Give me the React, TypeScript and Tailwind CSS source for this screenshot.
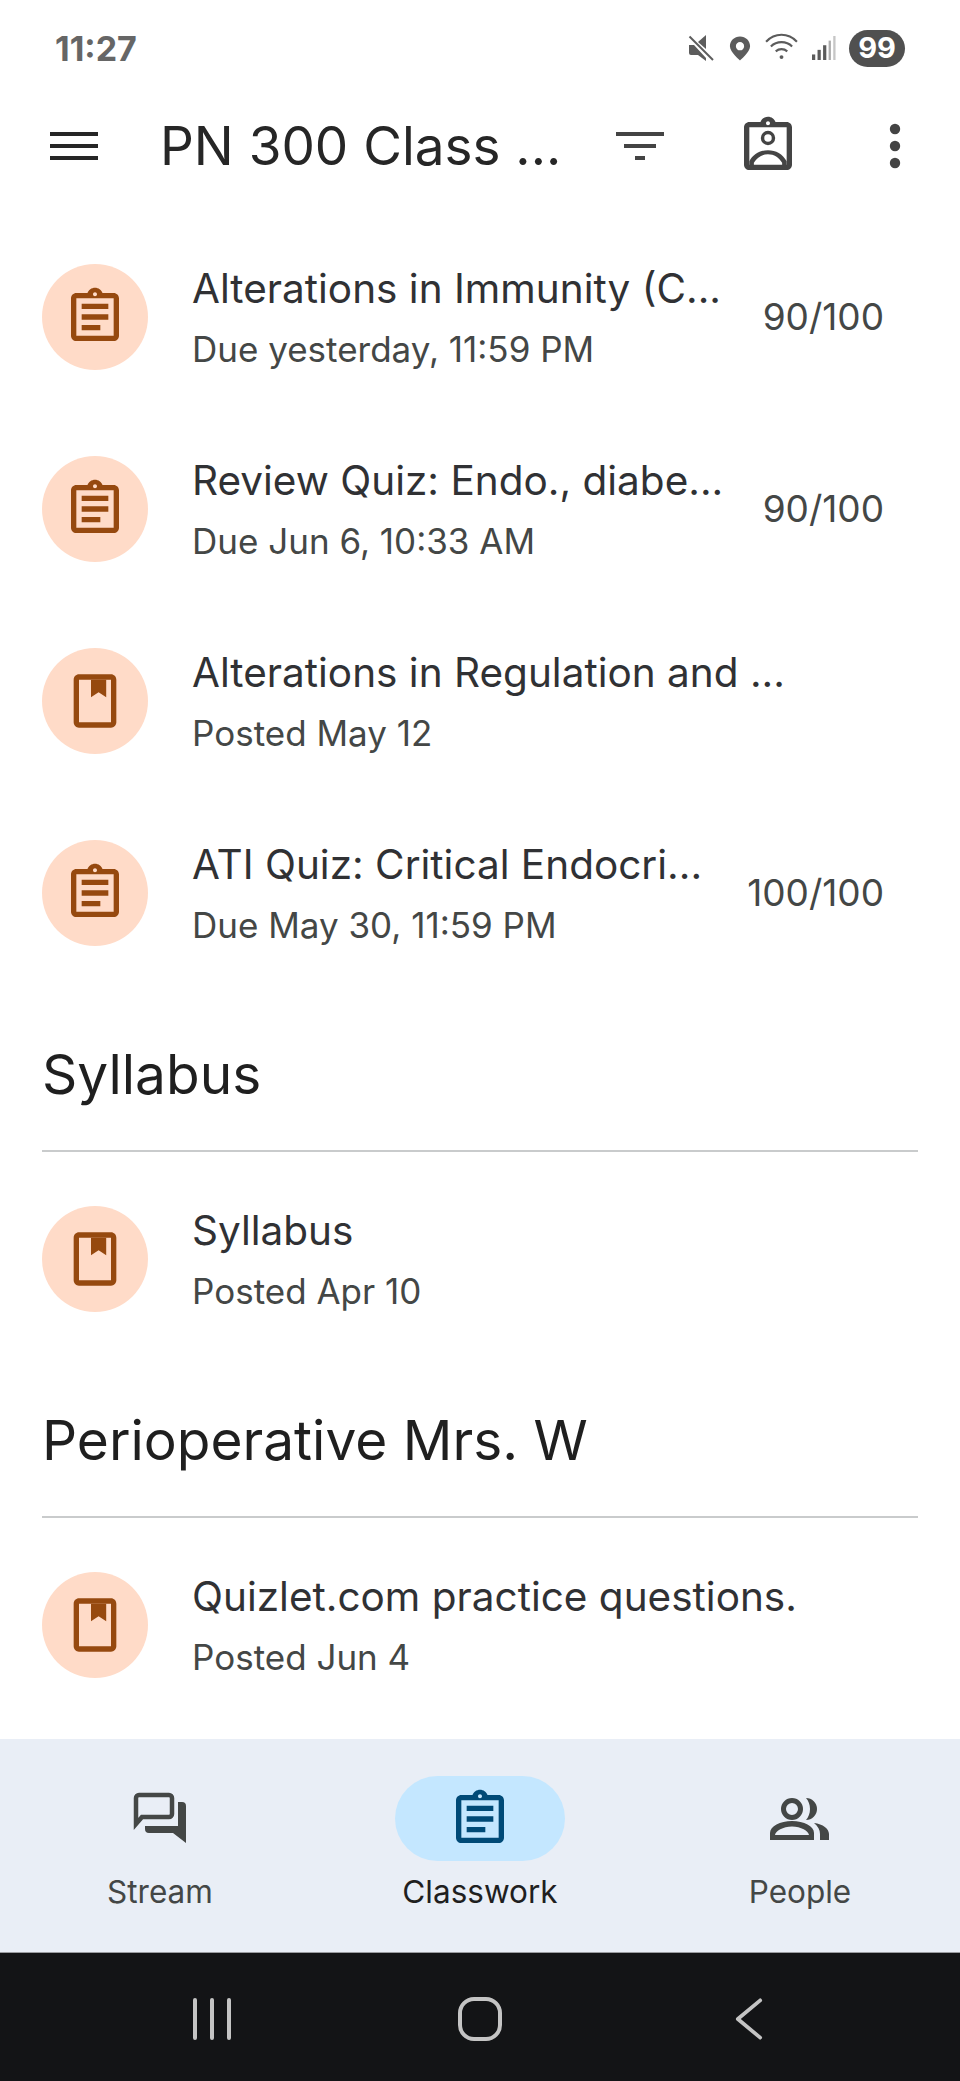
import React from "react";

const CLIP_OUTER =
  "M19 3h-4.18C14.4 1.84 13.3 1 12 1s-2.4.84-2.82 2H5c-1.1 0-2 .9-2 2v14c0 1.1.9 2 2 2h14c1.1 0 2-.9 2-2V5c0-1.1-.9-2-2-2zM12 2.75c.41 0 .75.34.75.75s-.34.75-.75.75-.75-.34-.75-.75.34-.75.75-.75zM19 19H5V5h14v14z";

function Assignment({ className }: { className: string }) {
  return (
    <svg viewBox="0 0 24 24" className={className} fill="currentColor">
      <path fillRule="evenodd" d={CLIP_OUTER} />
      <path d="M7 7h10v2H7zM7 11h10v2H7zM7 15h7v2H7z" />
    </svg>
  );
}

function Book({ className }: { className: string }) {
  return (
    <svg viewBox="0 0 24 24" className={className} fill="currentColor">
      <path
        fillRule="evenodd"
        d="M18 2H6c-1.1 0-2 .9-2 2v16c0 1.1.9 2 2 2h12c1.1 0 2-.9 2-2V4c0-1.1-.9-2-2-2zm0 18H6V4h12v16z"
      />
      <path d="M10.500 4h5.700v6.600l-2.850-1.900-2.850 1.900z" />
    </svg>
  );
}

function Row({
  icon,
  title,
  sub,
  score,
}: {
  icon: "a" | "b";
  title: string;
  sub: string;
  score?: string;
}) {
  return (
    <div className="flex h-[192px] items-center pl-[42px] pr-[76px]">
      <div className="flex h-[106px] w-[106px] shrink-0 items-center justify-center rounded-full bg-[#ffdbc8] text-[#96490f]">
        {icon === "a" ? <Assignment className="h-16 w-16" /> : <Book className="h-16 w-16" />}
      </div>
      <div className="ml-[44px] flex min-w-0 flex-1 flex-col pt-[3px]">
        <div className="whitespace-nowrap text-[40.5px] leading-[61px] text-[#303134]">{title}</div>
        <div className="whitespace-nowrap text-[35px] leading-[61px] text-[#444746]">{sub}</div>
      </div>
      {score && <div className="text-[37px] text-[#444746]">{score}</div>}
    </div>
  );
}

function Section({ name }: { name: string }) {
  return (
    <div className="mx-[42px] mb-[11px] border-b-2 border-[#c9cbcc] pb-[41px] pt-[50px] text-[55px] leading-[70px] text-[#1f1f1f]">
      {name}
    </div>
  );
}

function NavItem({
  label,
  active,
  children,
}: {
  label: string;
  active?: boolean;
  children: React.ReactNode;
}) {
  return (
    <div className="flex flex-1 flex-col items-center pt-[37px]">
      <div
        className={
          "flex h-[85px] w-[170px] items-center justify-center rounded-full " +
          (active ? "bg-[#c4e7ff] text-[#004a77]" : "text-[#444746]")
        }
      >
        {children}
      </div>
      <div
        className={
          "mt-[9px] text-[31.5px] leading-[44px] " +
          (active ? "text-[#1f1f1f]" : "text-[#444746]")
        }
      >
        {label}
      </div>
    </div>
  );
}

export default function App() {
  return (
    <div className="flex h-[2081px] w-[960px] flex-col overflow-hidden bg-white font-['Inter',sans-serif]">
      {/* status bar */}
      <div className="flex h-[95px] shrink-0 items-center justify-between pl-[55px] pr-[55px] pt-[1px]">
        <div className="text-[34px] font-bold text-[#666666]">11:27</div>
        <div className="flex items-center text-[#5c5c5c]">
          <svg viewBox="0 0 26 26" className="h-[26px] w-[26px]" fill="currentColor">
            <path d="M1 10h5l12 13v3l-8-6H3a2 2 0 0 1-2-2z" />
            <path d="M10 7l8-7v14z" />
            <path d="M1.500 1.500l23.500 23.500" stroke="currentColor" strokeWidth="2" />
          </svg>
          <svg viewBox="0 0 24 28" className="ml-[15px] h-[27px] w-[22px]" fill="currentColor">
            <path
              fillRule="evenodd"
              d="M12 1C5.800 1 1 5.700 1 11.500 1 18 12 27 12 27s11-9 11-15.500C23 5.700 18.200 1 12 1zm0 15a4.500 4.500 0 1 1 0-9 4.500 4.500 0 0 1 0 9z"
            />
          </svg>
          <svg viewBox="0 0 34 28" className="ml-[14px] mb-[3px] h-[27px] w-[33px]" fill="none" stroke="currentColor" strokeWidth="2.200">
            <path d="M1 9c9-9.500 23-9.500 32 0" />
            <path d="M6 14c6-6 16-6 22 0" />
            <path d="M11 19c3.500-3 8.500-3 12 0" />
            <circle cx="17" cy="25" r="2" fill="currentColor" stroke="none" />
          </svg>
          <svg viewBox="0 0 26 26" className="ml-[14px] h-[26px] w-[24px]" fill="currentColor">
            <rect x="0" y="20" width="3.500" height="6" />
            <rect x="6" y="15" width="3.500" height="11" />
            <rect x="12" y="10" width="3.500" height="16" />
            <rect x="18" y="5" width="2.500" height="21" opacity="0.5" />
            <rect x="23" y="0" width="2.500" height="26" opacity="0.35" />
          </svg>
          <div className="ml-[13px] flex h-[37px] w-[56px] items-center justify-center rounded-full bg-[#505050] text-[29px] font-bold text-white">
            99
          </div>
        </div>
      </div>

      {/* app bar */}
      <div className="flex h-[102px] shrink-0 items-center">
        <svg viewBox="0 0 48 32" className="ml-[50px] h-8 w-12 text-[#262626]" fill="currentColor">
          <path d="M0 2h48v4H0zM0 14h48v4H0zM0 26h48v4H0z" />
        </svg>
        <div className="ml-[62px] w-[456px] whitespace-nowrap text-[53px] leading-none text-[#262626]">
          PN 300 Class ...
        </div>
        <svg viewBox="0 0 48 32" className="h-8 w-12 text-[#444444]" fill="currentColor">
          <path d="M0 2h48v4H0zM8 14h32v4H8zM19 26h10v4H19z" />
        </svg>
        <svg viewBox="0 0 24 24" className="ml-[72px] h-16 w-16 text-[#444444]" fill="currentColor">
          <path fillRule="evenodd" d={CLIP_OUTER} />
          <path
            fillRule="evenodd"
            d="M12 6.300a2.700 2.700 0 1 1 0 5.400 2.700 2.700 0 0 1 0-5.400zm0 1.300a1.400 1.400 0 1 0 0 2.800 1.400 1.400 0 0 0 0-2.800zM5 17.700C6.500 15 9 13.600 12 13.600s5.500 1.400 7 4.100V20h-1.700v-1.700c-1.200-2-3-3.200-5.300-3.200s-4.100 1.200-5.300 3.200V20H5z"
          />
        </svg>
        <svg viewBox="0 0 12 46" className="ml-[89px] h-[46px] w-3 text-[#444444]" fill="currentColor">
          <circle cx="6" cy="6" r="5.200" />
          <circle cx="6" cy="23" r="5.200" />
          <circle cx="6" cy="40" r="5.200" />
        </svg>
      </div>

      {/* list */}
      <div className="flex-1 overflow-hidden pt-[24px]">
        <Row icon="a" title="Alterations in Immunity (C..." sub="Due yesterday, 11:59 PM" score="90/100" />
        <Row icon="a" title="Review Quiz: Endo., diabe..." sub="Due Jun 6, 10:33 AM" score="90/100" />
        <Row icon="b" title="Alterations in Regulation and ..." sub="Posted May 12" />
        <Row icon="a" title="ATI Quiz: Critical Endocri..." sub="Due May 30, 11:59 PM" score="100/100" />
        <Section name="Syllabus" />
        <Row icon="b" title="Syllabus" sub="Posted Apr 10" />
        <Section name="Perioperative Mrs. W" />
        <Row icon="b" title="Quizlet.com practice questions." sub="Posted Jun 4" />
      </div>

      {/* bottom navigation */}
      <div className="flex h-[213px] shrink-0 bg-[#e9eef6]">
        <NavItem label="Stream">
          <svg viewBox="0 0 54 54" className="h-[54px] w-[54px]" fill="none" stroke="currentColor">
            <path d="M3 32V6a3 3 0 0 1 3-3h30a3 3 0 0 1 3 3v16a3 3 0 0 1-3 3H9l-6 7z" strokeWidth="4.500" />
            <path d="M46 10h3a4 4 0 0 1 4 4v37L40 41H16a4 4 0 0 1-4-4v-3h33V10z" fill="currentColor" stroke="none" />
          </svg>
        </NavItem>
        <NavItem label="Classwork" active>
          <Assignment className="h-16 w-16" />
        </NavItem>
        <NavItem label="People">
          <svg viewBox="0 0 60 42" className="h-[42px] w-[60px]" fill="currentColor">
            <path
              fillRule="evenodd"
              d="M22 0a11 11 0 1 1 0 22 11 11 0 0 1 0-22zm0 5a6 6 0 1 0 0 12 6 6 0 0 0 0-12zM0 42v-7c0-7 10-12 22-12s22 5 22 12v7H0zm5-5h34c-.500-4-8-8.500-17-8.500S5.500 33 5 37z"
            />
            <path d="M36 0a11 11 0 0 1 0 22c2.500-3 4-6.500 4-11s-1.500-8-4-11zM44 25c9 1 15 6 15 11v6h-9v-6c0-4-2-8-6-11z" />
          </svg>
        </NavItem>
      </div>

      {/* system navigation */}
      <div className="grid h-[129px] shrink-0 grid-cols-3 border-t border-[#9a9ca0] bg-[#131416] pl-[78px] pr-[78px] pt-[4px]">
        <div className="flex items-center justify-center">
          <svg viewBox="0 0 40 42" className="h-[42px] w-10" fill="none" stroke="#c4c4c4" strokeWidth="4" strokeLinecap="round">
            <path d="M3 2v38M20 2v38M37 2v38" />
          </svg>
        </div>
        <div className="flex items-center justify-center">
          <svg viewBox="0 0 44 44" className="h-11 w-11" fill="none" stroke="#c4c4c4" strokeWidth="4">
            <rect x="2" y="2" width="40" height="40" rx="14" />
          </svg>
        </div>
        <div className="flex items-center justify-center">
          <svg viewBox="0 0 30 44" className="ml-[2px] h-11 w-[28px]" fill="none" stroke="#c4c4c4" strokeWidth="4" strokeLinecap="round" strokeLinejoin="round">
            <path d="M27 2L3 22l24 20" />
          </svg>
        </div>
      </div>
    </div>
  );
}
